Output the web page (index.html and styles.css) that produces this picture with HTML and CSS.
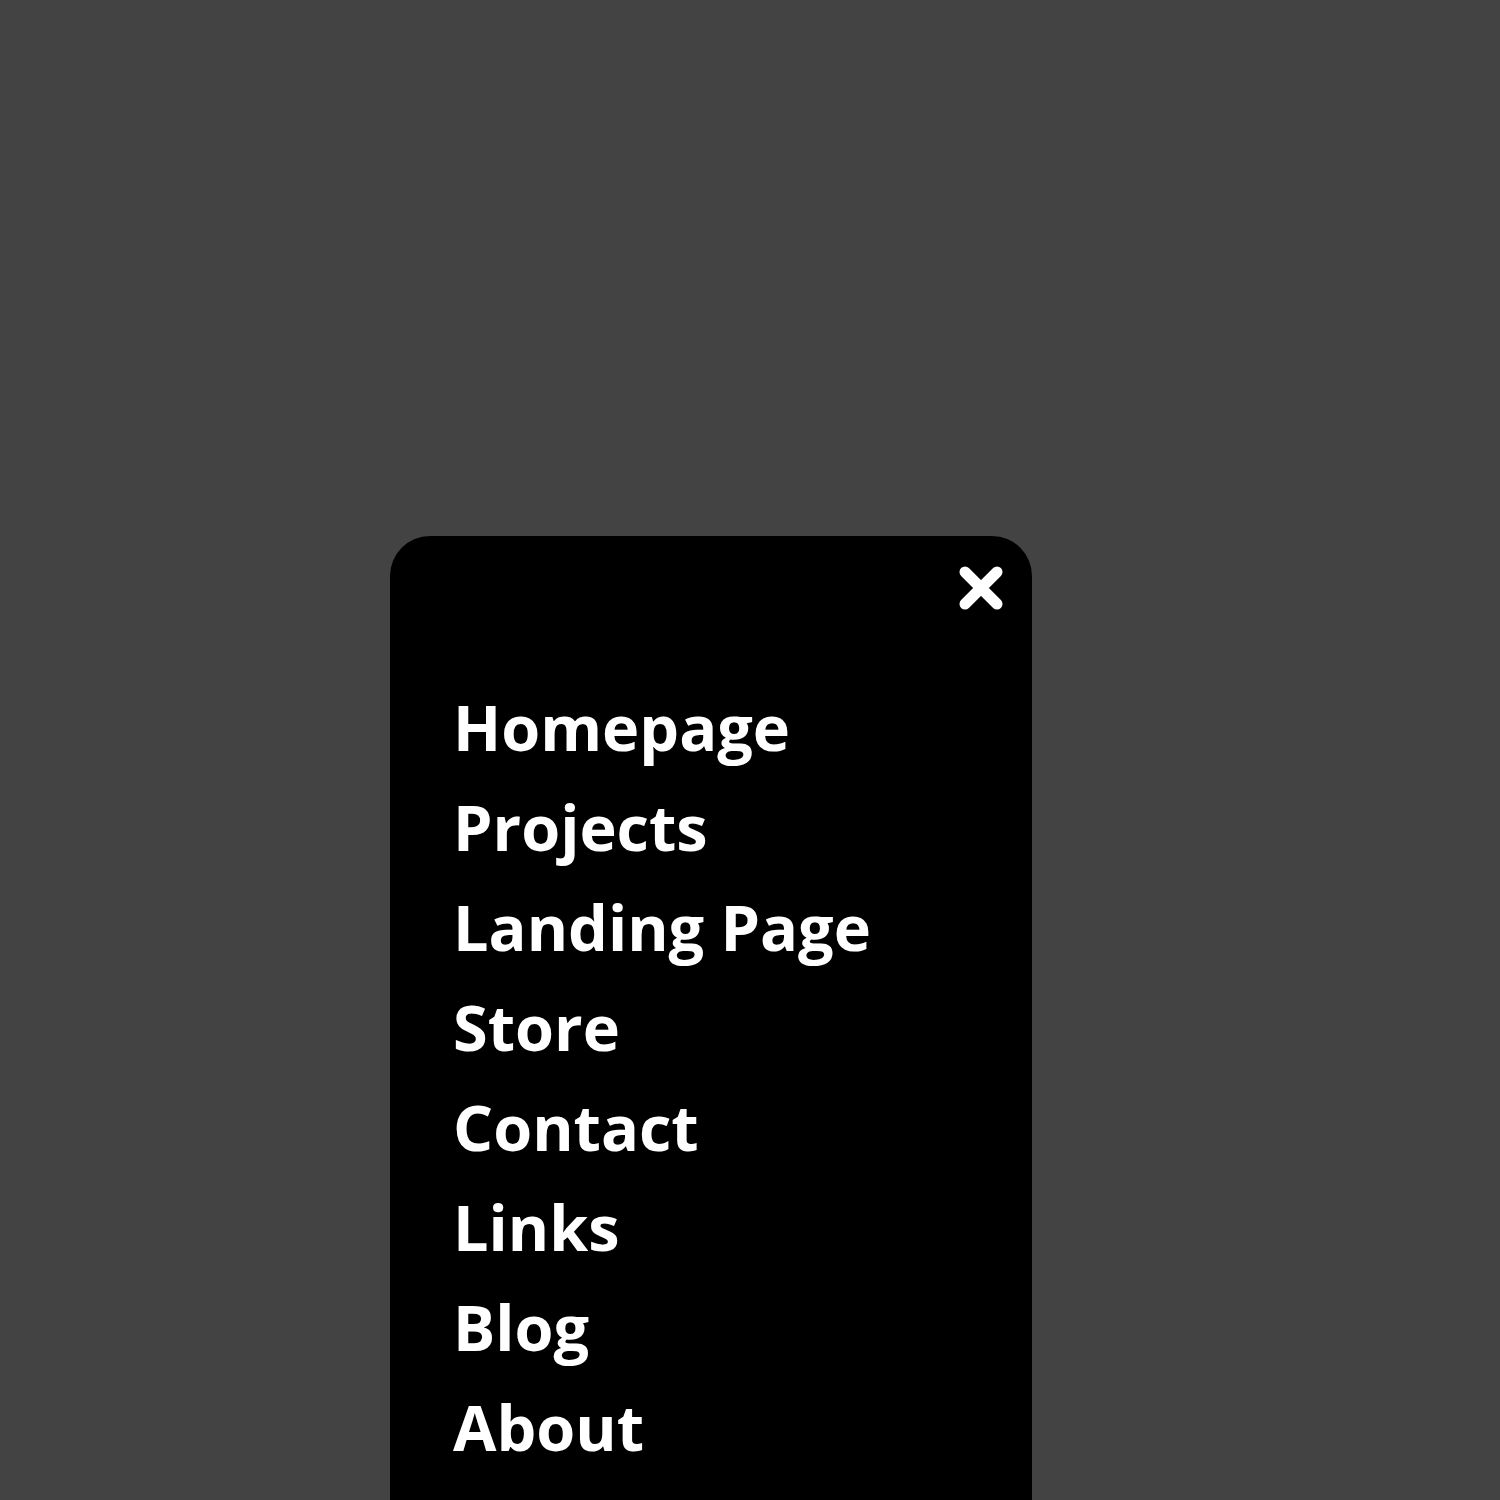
FILE: index.html
```html
<!DOCTYPE html>
<html>
<head>
<meta charset="utf-8">
<link rel="stylesheet" href="styles.css">
</head>
<body>
<div class="panel">
  <div class="panel-head">
    <svg class="close" width="44" height="44" viewBox="0 0 44 44">
      <path d="M6 6 L38 38 M38 6 L6 38" stroke="#fff" stroke-width="11" stroke-linecap="round" fill="none"/>
    </svg>
  </div>
  <nav class="menu">
    <a class="item">Homepage</a>
    <a class="item">Projects</a>
    <a class="item">Landing Page</a>
    <a class="item">Store</a>
    <a class="item">Contact</a>
    <a class="item">Links</a>
    <a class="item">Blog</a>
    <a class="item">About</a>
  </nav>
</div>
</body>
</html>
```

FILE: styles.css
```css
html, body {
  margin: 0;
  padding: 0;
  background: #434343;
  overflow: hidden;
  height: 1500px;
}
.panel {
  margin-left: 390px;
  margin-top: 536px;
  width: 642px;
  height: 1100px;
  background: #000;
  border-radius: 40px;
  box-sizing: border-box;
  padding: 30px 29px 0 63px;
}
.panel-head {
  display: flex;
  justify-content: flex-end;
  height: 44px;
}
.close {
  display: block;
}
.menu {
  display: flex;
  flex-direction: column;
  margin-top: 67px;
}
.item {
  font-family: "Open Sans", sans-serif;
  font-weight: 700;
  font-size: 63px;
  line-height: 100px;
  color: #fff;
  text-decoration: none;
}
```
